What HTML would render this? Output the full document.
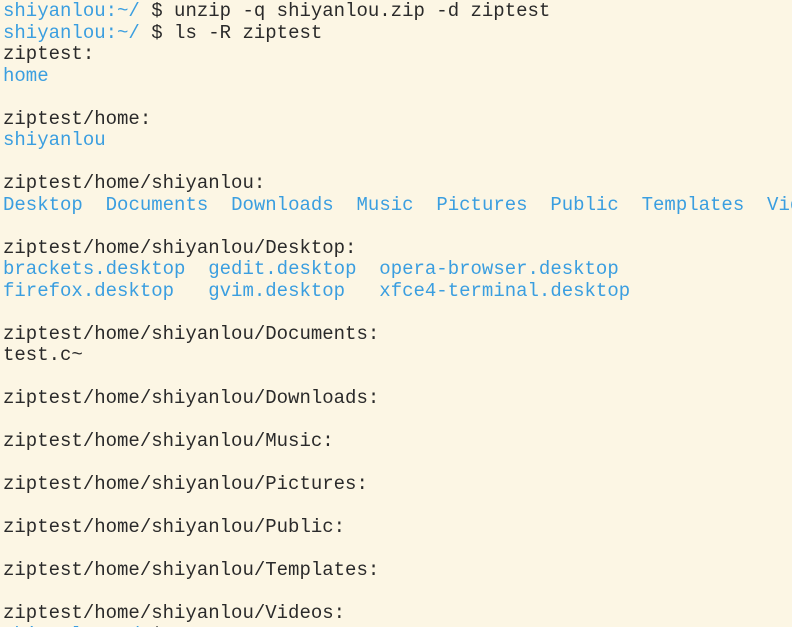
<!DOCTYPE html><html><head><style>
html,body{margin:0;padding:0;background:#fcf6e4;width:792px;height:627px;overflow:hidden}
pre{margin:0;padding:0 0 0 3px;width:789px;height:627px;overflow:hidden;font-family:"Liberation Mono",monospace;font-size:19px;line-height:21.5px;color:#2a2a2a;position:relative;top:1px;white-space:pre}
b{color:#3a9ee0;font-weight:normal}
.c{display:inline-block;width:10px;height:8px;background:#3a9ee0}
</style></head><body><pre><b>shiyanlou</b><b>:~/</b> $ unzip -q shiyanlou.zip -d ziptest
<b>shiyanlou</b><b>:~/</b> $ ls -R ziptest
ziptest:
<b>home</b>

ziptest/home:
<b>shiyanlou</b>

ziptest/home/shiyanlou:
<b>Desktop</b>  <b>Documents</b>  <b>Downloads</b>  <b>Music</b>  <b>Pictures</b>  <b>Public</b>  <b>Templates</b>  <b>Videos</b>

ziptest/home/shiyanlou/Desktop:
<b>brackets.desktop</b>  <b>gedit.desktop</b>  <b>opera-browser.desktop</b>
<b>firefox.desktop</b>   <b>gvim.desktop</b>   <b>xfce4-terminal.desktop</b>

ziptest/home/shiyanlou/Documents:
test.c~

ziptest/home/shiyanlou/Downloads:

ziptest/home/shiyanlou/Music:

ziptest/home/shiyanlou/Pictures:

ziptest/home/shiyanlou/Public:

ziptest/home/shiyanlou/Templates:

ziptest/home/shiyanlou/Videos:
<b>shiyanlou</b><b>:~/</b> $ <span class="c"></span></pre></body></html>
